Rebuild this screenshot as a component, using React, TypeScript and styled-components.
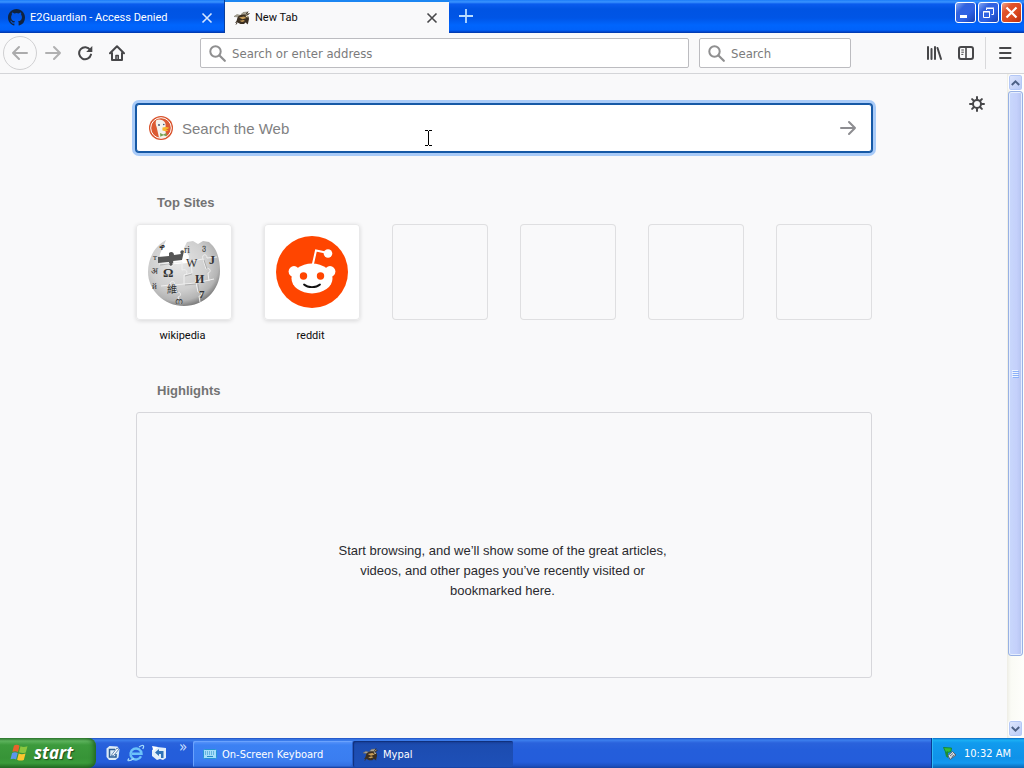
import React from "react";
import styled, { createGlobalStyle } from "styled-components";

const uiFont = '"DejaVu Sans Condensed", "Noto Sans", sans-serif';
const labelFont = 'Roboto, "DejaVu Sans Condensed", sans-serif';
const pageFont = '"Liberation Sans", Arial, sans-serif';

const GlobalStyle = createGlobalStyle`
  * { box-sizing: border-box; }
  body { margin: 0; background: #f9f9fa; font-family: ${uiFont}; font-size: 11px; color: #0c0c0d; }
  button { border: 0; padding: 0; margin: 0; background: none; font: inherit; color: inherit; cursor: pointer; }
  svg { display: block; flex: none; }
`;

const Screen = styled.div`
  display: flex;
  flex-direction: column;
  min-height: 100vh;
`;

/* Title bar with tabs */

const TitleBar = styled.header`
  display: flex;
  height: 33px;
  background: linear-gradient(#1c7cf8 0, #3a94ff 2px, #0a5cee 4px, #0054e3 9px, #0055e6 18px, #0065fd 25px, #0062fa 30px, #0040c4 32px, #0238a5 33px);
`;

const Tab = styled.div<{ $active?: boolean }>`
  display: flex;
  align-items: center;
  width: ${(p) => (p.$active ? "224px" : "225px")};
  padding: ${(p) => (p.$active ? "0 11px 0 9px" : "2px 11px 0 8px")};
  gap: 5px;
  color: ${(p) => (p.$active ? "#0c0c0d" : "#fff")};
  background: ${(p) => (p.$active ? "#f9f9fa" : "transparent")};
  border-top: ${(p) => (p.$active ? "2px solid #1c86f2" : "0")};
  border-right: ${(p) => (p.$active ? "0" : "1px solid #0a3f9e")};
`;

const TabLabel = styled.button`
  flex: 1;
  text-align: left;
  white-space: nowrap;
  overflow: hidden;
  font-family: ${labelFont};
`;

const IconButton = styled.button<{ $width?: number; $height?: number; $color?: string }>`
  display: flex;
  align-items: center;
  justify-content: center;
  flex: none;
  width: ${(p) => p.$width ?? 32}px;
  height: ${(p) => p.$height ?? 32}px;
  color: ${(p) => p.$color ?? "#474749"};
`;

const WindowControls = styled.div`
  display: flex;
  gap: 2px;
  margin-left: auto;
  padding: 2px 2px 0 0;
`;

const WindowButton = styled.button<{ $close?: boolean }>`
  display: flex;
  align-items: center;
  justify-content: center;
  width: 21px;
  height: 21px;
  border: 1px solid #fff;
  border-radius: 3px;
  color: #fff;
  background: ${(p) =>
    p.$close
      ? "linear-gradient(135deg, #f0a58c 0, #e0532b 30%, #dc4a20 60%, #b92f10 100%)"
      : "linear-gradient(135deg, #85a8f4 0, #3263df 30%, #2f62e4 60%, #1640b4 100%)"};
`;

/* Navigation toolbar */

const Toolbar = styled.nav`
  display: flex;
  align-items: center;
  height: 41px;
  padding: 0 3px;
  background: #f9f9fa;
  border-bottom: 1px solid #d4d5d8;
`;

const BackButton = styled(IconButton)`
  border: 1px solid #d0d0d2;
  border-radius: 50%;
`;

const Field = styled.label<{ $width?: number }>`
  display: flex;
  align-items: center;
  gap: 6px;
  height: 30px;
  padding: 0 8px;
  color: #8f8f90;
  background: #fff;
  border: 1px solid #bcbcc0;
  border-radius: 2px;
  flex: ${(p) => (p.$width ? `0 0 ${p.$width}px` : "1 1 0")};
  min-width: 0;
`;

const FieldInput = styled.input`
  flex: 1;
  min-width: 0;
  padding: 0;
  border: 0;
  outline: 0;
  background: transparent;
  font: 13px ${uiFont};
  &::placeholder { color: #7b7b7c; opacity: 1; }
`;

const Spacer = styled.div<{ $width: number }>`
  flex: 0 0 ${(p) => p.$width}px;
`;

const Divider = styled.div`
  width: 1px;
  height: 32px;
  margin: 0 3px;
  background: #d9d9db;
`;

/* New tab page */

const Viewport = styled.div`
  display: flex;
  flex: 1;
`;

const Page = styled.main`
  position: relative;
  flex: 1;
  padding: 30px 31px 60px 32px;
  font-family: ${pageFont};
`;

const Settings = styled(IconButton)`
  position: absolute;
  top: 14px;
  right: 14px;
`;

const Column = styled.div`
  width: 100%;
  max-width: 736px;
  margin: 0 auto;
`;

const SearchBox = styled.form`
  position: relative;
  display: flex;
  align-items: center;
  gap: 8px;
  height: 48px;
  padding: 0 7px 0 11px;
  background: #fff;
  border: 1px solid #1659a6;
  border-radius: 3px;
  box-shadow: 0 0 0 1px #1659a6, 0 0 0 4px #a9cbf8;
`;

const SearchInput = styled(FieldInput)`
  font: 15px ${pageFont};
  &::placeholder { color: #818182; }
`;

const Pointer = styled.svg`
  position: absolute;
  top: 24px;
  left: 287px;
`;

const SectionTitle = styled.h2`
  margin: 0;
  padding-left: 21px;
  font-size: 13px;
  line-height: 16px;
  font-weight: bold;
  color: #737373;
`;

const Section = styled.section<{ $gap: number }>`
  display: flex;
  flex-direction: column;
  gap: 13px;
  margin-top: ${(p) => p.$gap}px;
`;

const Sites = styled.ul`
  display: flex;
  flex-wrap: wrap;
  gap: 32px;
  margin: 0;
  padding: 0;
  list-style: none;
`;

const Site = styled.li`
  width: 96px;
  min-height: 126px;
`;

const SiteLink = styled.a`
  display: flex;
  flex-direction: column;
  gap: 6px;
  color: #0c0c0d;
  text-align: center;
  text-decoration: none;
  font-size: 11px;
  line-height: 20px;
  font-family: ${labelFont};
`;

const SiteName = styled.span`
  padding-right: 3px;
`;

const Tile = styled.div<{ $filled?: boolean }>`
  display: flex;
  align-items: center;
  justify-content: center;
  height: 96px;
  border-radius: 4px;
  background: ${(p) => (p.$filled ? "#fff" : "transparent")};
  box-shadow: ${(p) =>
    p.$filled
      ? "inset 0 0 0 1px #e9e9ea, 0 1px 4px rgba(12, 12, 13, 0.14)"
      : "inset 0 0 0 1px #dfdfe1"};
`;

const Empty = styled.div`
  display: flex;
  align-items: center;
  justify-content: center;
  min-height: 266px;
  padding-top: 52px;
  border: 1px solid #d7d7db;
  border-radius: 3px;
`;

const EmptyText = styled.p`
  max-width: 340px;
  margin: 0;
  padding-right: 3px;
  text-align: center;
  font-size: 13px;
  line-height: 20px;
  color: #2a2a2e;
`;

/* Scroll bar */

const ScrollTrack = styled.div`
  display: flex;
  flex-direction: column;
  width: 17px;
  padding: 0 1px 1px;
  background: linear-gradient(90deg, #eeede5, #fafbf5 4px, #fefefb);
`;

const ScrollButton = styled.button`
  display: flex;
  align-items: center;
  justify-content: center;
  flex: none;
  height: 17px;
  color: #4d6185;
  border: 1px solid #fff;
  border-radius: 3px;
  background: linear-gradient(135deg, #dfe7fd, #b8c9f6);
  box-shadow: inset 0 0 0 1px #b4c8f6;
`;

const Thumb = styled.div`
  display: flex;
  align-items: center;
  justify-content: center;
  flex: 565 0 0;
  border: 1px solid #98b1e4;
  border-radius: 3px;
  background: linear-gradient(90deg, #c9d8fc, #c4d0fb 60%, #b5c4f0);
  box-shadow: inset 0 0 0 1px #e6eefe;
`;

const ScrollRest = styled.div`
  flex: 64 0 0;
`;

/* Taskbar */

const Taskbar = styled.footer`
  display: flex;
  height: 30px;
  color: #fff;
  background: linear-gradient(#1f4fc0 0, #3d80ee 2px, #2a62dc 5px, #245edb 12px, #245ddb 24px, #1d4fc0 28px, #17409f 30px);
`;

const Start = styled.button`
  display: flex;
  align-items: center;
  gap: 5px;
  width: 96px;
  padding: 0 0 1px 10px;
  border-radius: 0 8px 8px 0;
  color: #fff;
  font: italic bold 17px "Open Sans", "Noto Sans", sans-serif;
  text-shadow: 1px 1px 1px #1c4a1c;
  background: linear-gradient(#2f7a30 0, #5db35d 3px, #3c9a3c 7px, #379437 20px, #3a9b3a 25px, #236b23 30px);
  box-shadow: inset -4px 0 5px -2px #1f611f;
`;

const QuickLaunch = styled.div`
  display: flex;
  align-items: center;
  gap: 3px;
  padding-left: 7px;
  width: 97px;
`;

const More = styled.button`
  align-self: flex-start;
  margin: 2px 0 0 7px;
  font-size: 15px;
  line-height: 14px;
  color: #cfe0ff;
`;

const Task = styled.button<{ $active?: boolean }>`
  display: flex;
  align-items: center;
  gap: 5px;
  width: 160px;
  height: 26px;
  margin-top: 3px;
  padding-left: 10px;
  border-radius: 2px;
  background: ${(p) =>
    p.$active
      ? "linear-gradient(#183f99, #1c4cb0 4px, #1e50b8)"
      : "linear-gradient(#5c97fb, #3c81f3 4px, #3a7df0 20px, #316cdd)"};
  box-shadow: ${(p) => (p.$active ? "inset 1px 1px 1px #10307c" : "inset 1px 1px 0 #6aa2fd, inset -1px -1px 0 #2a5fc9")};
`;

const Tray = styled.div`
  display: flex;
  align-items: center;
  gap: 6px;
  margin-left: auto;
  padding: 0 13px 0 10px;
  border-left: 1px solid #0a3b94;
  background: linear-gradient(#0c68c4 0, #1bb0f4 2px, #119bee 5px, #0f92e9 20px, #1399f0 25px, #0b66b4 30px);
  box-shadow: inset 1px 0 0 #2fbbf6;
`;

const CloseIcon = () => (
  <svg width="12" height="12" viewBox="0 0 12 12" stroke="currentColor" strokeWidth="1.6" aria-hidden="true">
    <path d="M1.5 1.5l9 9M10.5 1.5l-9 9" />
  </svg>
);

const GithubIcon = () => (
  <svg width="17" height="17" viewBox="0 0 16 16" fill="#10233f" aria-hidden="true">
    <path d="M8 0C3.58 0 0 3.58 0 8c0 3.54 2.29 6.53 5.47 7.59.4.07.55-.17.55-.38 0-.19-.01-.82-.01-1.49-2.01.37-2.53-.49-2.69-.94-.09-.23-.48-.94-.82-1.13-.28-.15-.68-.52-.01-.53.63-.01 1.08.58 1.23.82.72 1.21 1.87.87 2.33.66.07-.52.28-.87.51-1.07-1.78-.2-3.64-.89-3.64-3.95 0-.87.31-1.59.82-2.15-.08-.2-.36-1.02.08-2.12 0 0 .67-.21 2.2.82a7.5 7.5 0 0 1 4 0c1.53-1.04 2.2-.82 2.2-.82.44 1.1.16 1.92.08 2.12.51.56.82 1.27.82 2.15 0 3.07-1.87 3.75-3.65 3.95.29.25.54.73.54 1.48 0 1.07-.01 1.93-.01 2.2 0 .21.15.46.55.38A8.01 8.01 0 0 0 16 8c0-4.42-3.58-8-8-8z" />
  </svg>
);

const BeeIcon = ({ size = 16 }: { size?: number }) => (
  <svg width={size} height={size} viewBox="0 0 16 16" aria-hidden="true">
    <path d="M0 6.500L3 4.500l4 1L5 7zM7 4.500L9 2.500 13 2l1.500 2-4 2z" fill="#a9a493" stroke="#6f6a5c" strokeWidth=".5" />
    <path d="M3.500 7.500C5 5 9 4 12 5l2.500 1.500L15 9l-1 4.500-2.500-1L10 14H6.500l-3-1.500L1 13l1.500-2z" fill="#3b2f22" />
    <path d="M5 7.500l5-1 2.500 1.500-4 1.200zM5.500 10.800l4-.9 1.500 1-3 1.200z" fill="#c99e58" />
    <path d="M11.500 5.500l2 .5.500 1.500-2-.5z" fill="#e4d6ae" />
    <path d="M12 4.500l2-3M13 5l2.500-1.500M3 13l-1 1.500M12 12.500l2 1.500" stroke="#3b2f22" fill="none" />
  </svg>
);

const ArrowIcon = ({ left = false, color }: { left?: boolean; color: string }) => (
  <svg width="18" height="16" viewBox="0 0 18 16" fill="none" stroke={color} strokeWidth="2" strokeLinecap="round" strokeLinejoin="round" aria-hidden="true">
    {left ? <path d="M16 8H2M8 2L2 8l6 6" /> : <path d="M2 8h14M10 2l6 6-6 6" />}
  </svg>
);

const ReloadIcon = () => (
  <svg width="16" height="16" viewBox="0 0 16 16" aria-hidden="true">
    <path d="M13.2 5A6 6 0 1 0 14 9.6" fill="none" stroke="currentColor" strokeWidth="2" strokeLinecap="round" />
    <path d="M15.3 1v6H9.2z" fill="currentColor" />
  </svg>
);

const HomeIcon = () => (
  <svg width="16" height="16" viewBox="0 0 16 16" fill="none" stroke="currentColor" strokeWidth="2" strokeLinecap="round" strokeLinejoin="round" aria-hidden="true">
    <path d="M1 8.2L8 1.3l7 6.9M3 8v7h10V8" />
    <path d="M7 14.5v-4h2.2v4" strokeWidth="1.6" />
  </svg>
);

const SearchIcon = () => (
  <svg width="17" height="17" viewBox="0 0 17 17" fill="none" stroke="currentColor" strokeWidth="2" strokeLinecap="round" aria-hidden="true">
    <circle cx="6.5" cy="6.5" r="5.2" />
    <path d="M10.5 10.5l5.3 5.3" strokeWidth="2.2" />
  </svg>
);

const LibraryIcon = () => (
  <svg width="16" height="16" viewBox="0 0 16 16" stroke="currentColor" strokeWidth="2" strokeLinecap="round" aria-hidden="true">
    <path d="M2 2v12M5.500 4v10M9 2v12M11.500 3l3.500 11" />
  </svg>
);

const SidebarIcon = () => (
  <svg width="16" height="16" viewBox="0 0 16 16" fill="none" stroke="currentColor" aria-hidden="true">
    <rect x="1" y="2" width="14" height="12" rx="2" strokeWidth="2" />
    <path d="M8 2v12" strokeWidth="1.6" />
    <path d="M3.3 5h2.6M3.3 7.2h2.6M3.3 9.4h2" />
  </svg>
);

const MenuIcon = () => (
  <svg width="14" height="14" viewBox="0 0 14 14" stroke="currentColor" strokeWidth="2" strokeLinecap="round" aria-hidden="true">
    <path d="M2 2h10.500M2 7h10.500M2 12h10.500" />
  </svg>
);

const GearIcon = () => (
  <svg width="16" height="16" viewBox="0 0 16 16" fill="none" stroke="currentColor" strokeWidth="2" strokeLinecap="round" aria-hidden="true">
    <circle cx="8" cy="8" r="4" />
    <path d="M8 1v2.500M8 12.500V15M1 8h2.500M12.500 8H15M3.100 3.100l1.700 1.700M11.200 11.200l1.700 1.700M3.100 12.900l1.700-1.700M11.200 4.800l1.700-1.700" />
  </svg>
);

const DuckIcon = () => (
  <svg width="26" height="26" viewBox="0 0 26 26" aria-hidden="true">
    <circle cx="13" cy="13" r="12" fill="#d9532c" />
    <circle cx="13" cy="13" r="10.3" fill="#dc5a32" stroke="#fff" strokeWidth="1" />
    <path d="M8.500 5C11 3.700 15.500 4.700 17 7.500c1 2 .6 4.500.3 6.500l1 8.300c-2.300 1-5.500 1.200-7.300.2L8.600 12C7.600 9.600 7.200 6.700 8.500 5z" fill="#f4f2ec" />
    <path d="M14.500 12.600c2-1 4.800-.8 6.700.1-1 1.200-2.600 1.300-3.300 1.800 1 .5 2 .6 2.500 1-1.500 1-4.800.9-6-.2z" fill="#f7b52c" />
    <path d="M12 18l3.300 1.500 3-1.500.3 3.500-3-1.300-3.300 1.500z" fill="#78a452" />
    <circle cx="11" cy="10" r=".9" fill="#354d6d" />
    <circle cx="15.800" cy="9.500" r=".8" fill="#354d6d" />
  </svg>
);

const WikipediaLogo = () => (
  <svg width="76" height="76" viewBox="0 0 76 76" role="img" aria-label="Wikipedia globe">
    <defs>
      <radialGradient id="globe" cx="42%" cy="36%" r="66%">
        <stop offset="0" stopColor="#e6e6e6" />
        <stop offset=".6" stopColor="#cfcfcf" />
        <stop offset=".85" stopColor="#b4b4b4" />
        <stop offset="1" stopColor="#777" />
      </radialGradient>
    </defs>
    <path d="M20 6L14 20l-1 6 5 5 24-2 1-7-5-8 3-6 6-1 5 3 5-3 6 1 4 4C72 18 74 28 74 37c0 19-16 35-36 35S2 56 2 38C2 24 9 12 20 6z" fill="url(#globe)" />
    <path d="M12 23l11-1v-3c2-2 5-1 5 2l7-1c-2-3 1-5 3-3l-2 9-9 1c2 4-3 6-4 4v-3l-11 1z" fill="#555" />
    <path d="M13 30l10-1c-1 5 5 5 4 0l9-1v8c5-2 7 4 2 5v9l-10 1c2-5-4-5-4 0l-9 1M38 50l12-1c-2-5 4-7 4-1l14-3M38 41l8-2-1-12 12-2c-2-5 4-6 4-1l10-1M57 25l3 10c4-2 6 3 2 4l1 8M50 49l2 9c4-1 5 4 1 4l1 6M28 51l3 8c4-2 5 3 1 4l2 7" fill="none" stroke="#efefef" strokeWidth="1" />
    <path d="M14 31l9-1M39 51l11-1M39 42l7-2M58 26l3 9M29 52l3 7M53 58l-1-8" fill="none" stroke="#a5a5a5" strokeWidth=".8" />
    <g fill="#333" fontFamily="Liberation Serif, serif">
      <text x="17" y="43" fontSize="13" fontWeight="bold">Ω</text>
      <text x="40" y="33" fontSize="12">W</text>
      <text x="49" y="49" fontSize="12" fontWeight="bold">И</text>
      <text x="21" y="59" fontSize="10" fontFamily="Noto Sans CJK SC, sans-serif">維</text>
      <text x="53" y="64" fontSize="11" fontWeight="bold">7</text>
      <text x="38" y="19" fontSize="10">ri</text>
      <text x="56" y="16" fontSize="8">ვ</text>
      <text x="63" y="30" fontSize="12" fontWeight="bold">J</text>
      <text x="5" y="40" fontSize="9">अ</text>
      <text x="7" y="26" fontSize="9">т</text>
      <text x="6" y="55" fontSize="9">й</text>
      <text x="29" y="70" fontSize="8">ന</text>
      <text x="13" y="16" fontSize="9">ቀ</text>
    </g>
  </svg>
);

const RedditLogo = () => (
  <svg width="72" height="72" viewBox="0 0 72 72" role="img" aria-label="Reddit">
    <circle cx="36" cy="36" r="36" fill="#ff4500" />
    <path d="M36.500 30l3.500-15.500 12 2.500" fill="none" stroke="#fff" strokeWidth="2" />
    <circle cx="52" cy="17.500" r="4.300" fill="#fff" />
    <circle cx="18" cy="35.500" r="5.400" fill="#fff" />
    <circle cx="54" cy="35.500" r="5.400" fill="#fff" />
    <ellipse cx="36" cy="42.500" rx="20.500" ry="15" fill="#fff" />
    <circle cx="27.500" cy="40" r="3.700" fill="#ff4500" />
    <circle cx="44.500" cy="40" r="3.700" fill="#ff4500" />
    <path d="M28 48.500c4 3.600 12 3.600 16 0" fill="none" stroke="#111" strokeWidth="1.800" strokeLinecap="round" />
  </svg>
);

const Chevron = ({ down = false }: { down?: boolean }) => (
  <svg width="9" height="6" viewBox="0 0 9 6" fill="none" stroke="currentColor" strokeWidth="2" aria-hidden="true">
    <path d={down ? "M.8 1L4.500 4.600 8.200 1" : "M.8 5L4.500 1.400 8.200 5"} />
  </svg>
);

const WindowsIcon = () => (
  <svg width="19" height="18" viewBox="0 0 19 18" aria-hidden="true">
    <path d="M4 1.500c2-1 4-.8 5.500.2L8 8C6.300 7 4.500 7 2.400 7.700z" fill="#e8622c" />
    <path d="M10.500 2.200c2 1 4.200 1 7 0L15.800 8.400c-2.500 1-5 .8-6.800-.1z" fill="#8ac63f" />
    <path d="M2.100 8.900c2-.9 4-.8 5.600.2l-1.600 6.300C4.500 14.500 2.500 14.400.5 15.200z" fill="#5b96ec" />
    <path d="M8.700 9.600c2 1 4.300 1 6.800 0L13.800 16c-2.500 1-4.800.7-6.700-.3z" fill="#fbc62f" />
  </svg>
);

const DesktopIcon = () => (
  <svg width="20" height="18" viewBox="0 0 20 18" aria-hidden="true">
    <path d="M3.500 4.500l3-2.500 8 .5 2 3-1 8-3 2.500H6l-2.500-3z" fill="#dcebf7" />
    <path d="M12 5.500H6.500v7.500h6.500V10" stroke="#2b5d95" fill="none" strokeWidth="1.500" />
    <path d="M9 10.500l5-6.500 1.800 1.300-5 6-2.300.8z" fill="#fff" stroke="#2b5d95" strokeWidth=".7" />
  </svg>
);

const ExplorerIcon = () => (
  <svg width="20" height="18" viewBox="0 0 20 18" fill="none" aria-hidden="true">
    <path d="M15 12.300A5.500 5.500 0 1 1 15.500 9.700H6" stroke="#6cc3fa" strokeWidth="2.400" />
    <path d="M3 14.500c-3 3.500 1 2.500 5 0M13 3c4-2.500 6-2 3.700 2" stroke="#a5dcfc" strokeWidth="1.200" />
  </svg>
);

const MailIcon = () => (
  <svg width="20" height="18" viewBox="0 0 20 18" aria-hidden="true">
    <path d="M3 6l5-3 9 1v10l-3 2-3-1-3 1-5-4z" fill="#e2effa" />
    <path d="M6 8.500l4-3.500v2h4.500v7H12V10h-2v2z" fill="#2f73b8" />
    <path d="M3 2l6 1-4.500 4z" fill="#fff" />
  </svg>
);

const KeyboardIcon = () => (
  <svg width="14" height="12" viewBox="0 0 14 12" aria-hidden="true">
    <rect x=".5" y="1.500" width="13" height="9" rx="1" fill="#a5defa" stroke="#2594d4" />
    <path d="M2 4h10M2 6h10" stroke="#278bc7" strokeDasharray="1 1" />
    <path d="M4 8.500h6" stroke="#278bc7" />
  </svg>
);

const TrayIcon = () => (
  <svg width="16" height="16" viewBox="0 0 16 16" aria-hidden="true">
    <path d="M1.500 2.500l8 .5-.5 3.500L4 8z" fill="#35bd38" stroke="#127f28" strokeWidth=".8" />
    <path d="M3 7.500L6 6v7l-2-1.500z" fill="#1c8b38" />
    <path d="M6 10.500l4.500-4 3.500 3.500-6 4.500z" fill="#d6dce3" stroke="#4d5966" strokeWidth=".9" />
    <path d="M8 11l3-2.500M9.500 12.200l3-2.500" stroke="#4d5966" strokeWidth=".8" />
  </svg>
);

const sites = [
  { name: "wikipedia", href: "#wikipedia", logo: <WikipediaLogo /> },
  { name: "reddit", href: "#reddit", logo: <RedditLogo /> },
];
const emptySites = [1, 2, 3, 4];

export default function App() {
  return (
    <Screen>
      <GlobalStyle />
      <TitleBar>
        <Tab>
          <GithubIcon />
          <TabLabel>E2Guardian - Access Denied</TabLabel>
          <IconButton aria-label="Close tab" $width={12} $height={28} $color="#d5e6ff"><CloseIcon /></IconButton>
        </Tab>
        <Tab $active>
          <BeeIcon />
          <TabLabel>New Tab</TabLabel>
          <IconButton aria-label="Close tab" $width={12} $height={28}><CloseIcon /></IconButton>
        </Tab>
        <IconButton aria-label="New tab" $width={34} $color="#b9dcff">
          <svg width="14" height="14" viewBox="0 0 14 14" stroke="currentColor" strokeWidth="1.800" aria-hidden="true">
            <path d="M7 0v14M0 7h14" />
          </svg>
        </IconButton>
        <WindowControls>
          <WindowButton aria-label="Minimize">
            <svg width="13" height="13" viewBox="0 0 13 13" aria-hidden="true"><path d="M1 9h7v3H1z" fill="currentColor" /></svg>
          </WindowButton>
          <WindowButton aria-label="Restore">
            <svg width="13" height="13" viewBox="0 0 13 13" fill="none" stroke="currentColor" aria-hidden="true">
              <path d="M4.500 4V2.500h7v6H9.500M4 2h8" />
              <path d="M1.500 5.500h6v6h-6zM1 6h7" />
            </svg>
          </WindowButton>
          <WindowButton aria-label="Close" $close>
            <svg width="13" height="13" viewBox="0 0 13 13" stroke="currentColor" strokeWidth="2.200" aria-hidden="true"><path d="M1.500 1.500l10 10M11.500 1.500l-10 10" /></svg>
          </WindowButton>
        </WindowControls>
      </TitleBar>

      <Toolbar aria-label="Navigation">
        <BackButton aria-label="Back" $width={34} $height={34}><ArrowIcon left color="#ababac" /></BackButton>
        <IconButton aria-label="Forward"><ArrowIcon color="#b0b0b1" /></IconButton>
        <IconButton aria-label="Reload"><ReloadIcon /></IconButton>
        <IconButton aria-label="Home"><HomeIcon /></IconButton>
        <Spacer $width={67} />
        <Field>
          <SearchIcon />
          <FieldInput aria-label="Address" placeholder="Search or enter address" />
        </Field>
        <Spacer $width={10} />
        <Field $width={152}>
          <SearchIcon />
          <FieldInput aria-label="Search" placeholder="Search" />
        </Field>
        <Spacer $width={67} />
        <IconButton aria-label="Library"><LibraryIcon /></IconButton>
        <IconButton aria-label="Sidebars"><SidebarIcon /></IconButton>
        <Divider />
        <IconButton aria-label="Menu"><MenuIcon /></IconButton>
      </Toolbar>

      <Viewport>
        <Page>
          <Settings aria-label="Page settings"><GearIcon /></Settings>
          <Column>
            <SearchBox>
              <DuckIcon />
              <SearchInput aria-label="Search the Web" placeholder="Search the Web" />
              <IconButton type="submit" aria-label="Submit search"><ArrowIcon color="#8d8d91" /></IconButton>
              <Pointer width="9" height="18" viewBox="0 0 9 18" fill="none" stroke="#000" aria-hidden="true">
                <path d="M1 1.500h3M5 1.500h3M4.500 2v14M1 16.500h3M5 16.500h3" />
              </Pointer>
            </SearchBox>

            <Section $gap={43}>
              <SectionTitle>Top Sites</SectionTitle>
              <Sites>
                {sites.map((site) => (
                  <Site key={site.name}>
                    <SiteLink href={site.href}>
                      <Tile $filled>{site.logo}</Tile>
                      <SiteName>{site.name}</SiteName>
                    </SiteLink>
                  </Site>
                ))}
                {emptySites.map((slot) => (
                  <Site key={slot}><Tile /></Site>
                ))}
              </Sites>
            </Section>

            <Section $gap={33}>
              <SectionTitle>Highlights</SectionTitle>
              <Empty>
                <EmptyText>
                  Start browsing, and we’ll show some of the great articles, videos, and other pages you’ve recently visited or bookmarked here.
                </EmptyText>
              </Empty>
            </Section>
          </Column>
        </Page>
        <ScrollTrack>
          <ScrollButton aria-label="Scroll up"><Chevron /></ScrollButton>
          <Thumb>
            <svg width="7" height="8" viewBox="0 0 7 8" aria-hidden="true">
              <path d="M0 .5h6M0 2.500h6M0 4.500h6M0 6.500h6" stroke="#eef4fe" />
              <path d="M1 1.500h6M1 3.500h6M1 5.500h6M1 7.500h6" stroke="#8cb0f8" />
            </svg>
          </Thumb>
          <ScrollRest />
          <ScrollButton aria-label="Scroll down"><Chevron down /></ScrollButton>
        </ScrollTrack>
      </Viewport>

      <Taskbar>
        <Start><WindowsIcon />start</Start>
        <QuickLaunch>
          <IconButton aria-label="Show desktop" $width={20} $height={24}><DesktopIcon /></IconButton>
          <IconButton aria-label="Internet Explorer" $width={20} $height={24}><ExplorerIcon /></IconButton>
          <IconButton aria-label="Mail" $width={20} $height={24}><MailIcon /></IconButton>
          <More aria-label="More programs">»</More>
        </QuickLaunch>
        <Task><KeyboardIcon />On-Screen Keyboard</Task>
        <Task $active><BeeIcon size={15} />Mypal</Task>
        <Tray><TrayIcon /><time>10:32 AM</time></Tray>
      </Taskbar>
    </Screen>
  );
}
